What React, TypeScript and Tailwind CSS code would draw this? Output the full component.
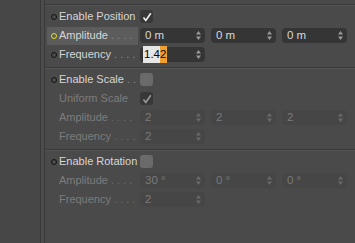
import type { ReactNode } from "react";

const Dot = ({ active }: { active?: boolean }) => (
  <span
    className={`ml-[4px] w-[6px] h-[6px] rounded-full border ${
      active ? "border-[#e0e020]" : "border-[#111]"
    }`}
  />
);

const Spinner = ({ dim }: { dim?: boolean }) => (
  <svg width="5" height="9" viewBox="0 0 5 9" className="ml-auto mr-[4px]">
    <path d="M2.5 0 L5 3.5 L0 3.5 Z" fill={dim ? "#6a6a6a" : "#9a9a9a"} />
    <path d="M2.5 9 L5 5.5 L0 5.5 Z" fill={dim ? "#6a6a6a" : "#9a9a9a"} />
  </svg>
);

const Field = ({ children, dim }: { children: ReactNode; dim?: boolean }) => (
  <div
    className={`flex items-center w-[65px] h-[15px] rounded-[4px] pl-[5px] text-[11.5px] ${
      dim ? "bg-[#464646] text-[#7a7a7a]" : "bg-[#353535] text-[#d8d8d8]"
    }`}
  >
    <span>{children}</span>
    <Spinner dim={dim} />
  </div>
);

const Check = ({ checked, dim }: { checked?: boolean; dim?: boolean }) => (
  <div
    className={`w-[13px] h-[13px] rounded-[3px] flex items-center justify-center ${
      checked ? "bg-[#383838]" : "bg-[#6a6a6a]"
    }`}
  >
    {checked && (
      <svg width="10" height="10" viewBox="0 0 10 10">
        <path
          d="M1.5 5.5 L3.8 8.5 L8.8 1.2"
          stroke={dim ? "#9a9a9a" : "#f0f0f0"}
          strokeWidth="1.6"
          fill="none"
        />
      </svg>
    )}
  </div>
);

const Row = ({
  label,
  dots = "",
  dot,
  active,
  dim,
  children,
}: {
  label: string;
  dots?: string;
  dot?: boolean;
  active?: boolean;
  dim?: boolean;
  children?: ReactNode;
}) => (
  <div className="flex items-center h-[19px]">
    <div
      className={`flex items-center w-[91px] h-[18px] ml-[2px] overflow-hidden ${
        active ? "bg-[#5c5c5c]" : ""
      }`}
    >
      <span className="w-[12px] shrink-0 flex items-center">{dot && <Dot active={active} />}</span>
      <span
        className={`whitespace-pre text-[11px] ${
          dim ? "text-[#7c7c7c]" : "text-[#d6d6d6]"
        }`}
      >
        {label}
        <span className={dim ? "text-[#6c6c6c]" : "text-[#8a8a8a]"}>{dots}</span>
      </span>
    </div>
    <div className="flex items-center gap-[6px] ml-[2px]">{children}</div>
  </div>
);

const Section = ({ children }: { children: ReactNode }) => (
  <div className="border-t border-t-[#3a3a3a] shadow-[inset_0_1px_0_#555] pt-[2px] pb-[3px]">
    {children}
  </div>
);

export default function App() {
  return (
    <div
      className="flex w-[355px] h-[243px] bg-[#474747] overflow-hidden"
      style={{ fontFamily: '"Liberation Sans", Arial, sans-serif' }}
    >
      <div className="w-[40px] bg-[#474747]" />
      <div className="w-[5px] border-l border-l-[#393939] border-r border-r-[#393939] bg-[#4c4c4c]" />
      <div className="flex-1 bg-[#4a4a4a] pt-[4px]">
        <Section>
          <Row label="Enable Position" dot>
            <Check checked />
          </Row>
          <Row label="Amplitude" dots=" . . . . " dot active>
            <Field>0 m</Field>
            <Field>0 m</Field>
            <Field>0 m</Field>
          </Row>
          <Row label="Frequency" dots=" . . . ." dot>
            <div className="flex items-center w-[65px] h-[15px] rounded-[4px] pl-[3px] text-[11.5px] bg-[#353535]">
              <span className="bg-[#e6e6e6] text-black pl-[1px]">1.4</span>
              <span className="bg-[#f0a030] text-black pr-[1px]">2</span>
              <Spinner />
            </div>
          </Row>
        </Section>
        <Section>
          <Row label="Enable Scale" dots=" . ." dot>
            <Check />
          </Row>
          <Row label="Uniform Scale" dim>
            <Check checked dim />
          </Row>
          <Row label="Amplitude" dots=" . . . . " dim>
            <Field dim>2</Field>
            <Field dim>2</Field>
            <Field dim>2</Field>
          </Row>
          <Row label="Frequency" dots=" . . . ." dim>
            <Field dim>2</Field>
          </Row>
        </Section>
        <Section>
          <Row label="Enable Rotation" dot>
            <Check />
          </Row>
          <Row label="Amplitude" dots=" . . . . " dim>
            <Field dim>30 °</Field>
            <Field dim>0 °</Field>
            <Field dim>0 °</Field>
          </Row>
          <Row label="Frequency" dots=" . . . ." dim>
            <Field dim>2</Field>
          </Row>
        </Section>
      </div>
    </div>
  );
}
